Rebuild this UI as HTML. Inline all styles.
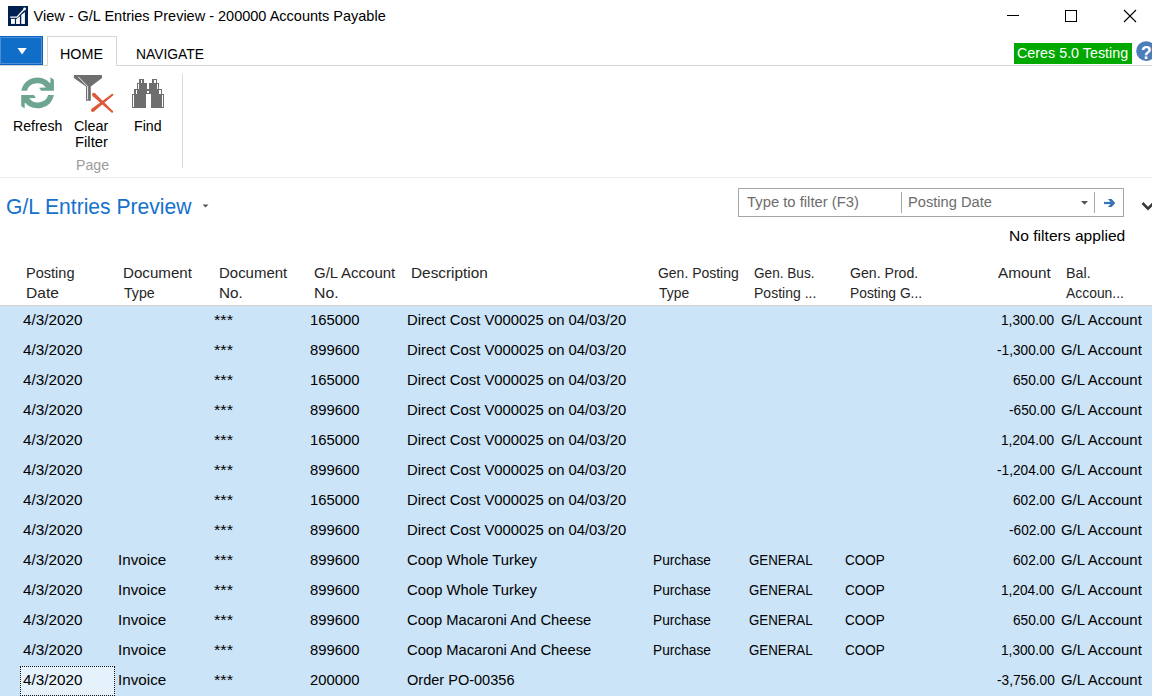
<!DOCTYPE html>
<html><head><meta charset="utf-8">
<style>
html,body{margin:0;padding:0;}
body{width:1152px;height:696px;overflow:hidden;position:relative;background:#fff;font-family:"Liberation Sans",sans-serif;color:#000;}
.a{position:absolute;}
.t{position:absolute;white-space:nowrap;line-height:1;transform-origin:0 0;}
.r{font-size:14.7px;color:#000;}
.h{font-size:14.6px;color:#262626;}
</style></head><body>
<!-- title bar -->
<svg class="a" style="left:8px;top:6px" width="20" height="20" viewBox="0 0 20 20">
  <rect x="0" y="0" width="20" height="20" fill="#002050"/>
  <g fill="#fff">
  <rect x="3" y="12.9" width="3.9" height="5"/>
  <path d="M8.1 13.3 L11.9 10.2 L11.9 17.9 L8.1 17.9 Z"/>
  <path d="M13.3 9.0 L16.9 5.9 L16.9 17.9 L13.3 17.9 Z"/>
  </g>
  <polyline points="2.2,11.1 8.9,11.1 16.5,3" fill="none" stroke="#fff" stroke-width="1.3"/>
  <circle cx="16.6" cy="3" r="1.4" fill="#fff"/>
</svg>
<!-- window controls -->
<div class="a" style="left:1007px;top:15px;width:12px;height:1px;background:#000"></div>
<div class="a" style="left:1065px;top:10px;width:10px;height:10px;border:1px solid #000"></div>
<svg class="a" style="left:1123px;top:9px" width="14" height="14" viewBox="0 0 14 14">
  <path d="M1 1 L13 13 M13 1 L1 13" stroke="#000" stroke-width="1.1" fill="none"/>
</svg>

<!-- ribbon tabs -->
<div class="a" style="left:-1px;top:36px;width:44px;height:29px;background:#106ec8;box-sizing:border-box;border:1px solid #0b62c0;box-shadow:inset 0 0 0 1px #4b8fd8"></div>
<svg class="a" style="left:17px;top:47px" width="10" height="8" viewBox="0 0 10 8"><path d="M0.5 1 L9.7 1 L5.1 7.4 Z" fill="#fff"/></svg>
<div class="a" style="left:0;top:65px;width:1152px;height:1px;background:#d6d6d6"></div>
<div class="a" style="left:47px;top:36px;width:70px;height:30px;box-sizing:border-box;border:1px solid #d6d6d6;border-bottom:none;background:#fff"></div>

<div class="a" style="left:1014px;top:43px;width:118px;height:21px;background:#00a800"></div>
<svg class="a" style="left:1134px;top:39px" width="20" height="24" viewBox="1134 39 20 24">
  <circle cx="1146.1" cy="51.05" r="9.9" fill="#4c7db9"/>
  <text x="1146.3" y="58.6" text-anchor="middle" font-family="Liberation Sans" font-weight="bold" font-size="17.5" fill="#fff">?</text>
</svg>

<!-- ribbon body -->
<svg class="a" style="left:16px;top:72px" width="44" height="42" viewBox="16 72 44 42">
  <g fill="#6ea591">
  <path d="M21.2 90.8 A16.4 15.4 0 0 1 50.3 83.4 L50.5 77.3 L53.9 79.8 L53.9 90.8 L41.2 90.8 L39.2 87.8 L46.0 87.6 A10.7 9.9 0 0 0 26.9 90.8 Z"/>
  <path d="M21.2 90.8 A16.4 15.4 0 0 1 50.3 83.4 L50.5 77.3 L53.9 79.8 L53.9 90.8 L41.2 90.8 L39.2 87.8 L46.0 87.6 A10.7 9.9 0 0 0 26.9 90.8 Z" transform="rotate(180 37.55 92.95)"/>
  </g>
</svg>
<svg class="a" style="left:70px;top:72px" width="48" height="42" viewBox="70 72 48 42">
  <path d="M73.9 75 L102 75 L102 78 L90.8 86.5 L90.8 100.7 L86 100.7 L86 86.5 L73.9 78 Z" fill="#6e6e6e"/>
  <path d="M78.2 76.8 L87.6 86.4 L87.6 99.6" fill="none" stroke="#fff" stroke-width="0.9"/>
  <g fill="#dc5a3a"><path d="M92.57 95.91 L111.52 112.53 L112.88 111.07 L95.03 93.29 Z"/><path d="M111.78 94.01 L91.69 108.78 L93.91 111.62 L113.02 95.59 Z"/><circle cx="93.8" cy="94.6" r="1.8"/><circle cx="92.8" cy="110.2" r="1.8"/><circle cx="112.2" cy="111.8" r="1"/><circle cx="112.4" cy="94.8" r="1"/></g>
</svg>
<svg class="a" style="left:126px;top:74px" width="44" height="38" viewBox="126 74 44 38" shape-rendering="crispEdges">
  <g fill="#6e6e6e"><rect x="139" y="79" width="5" height="4"/><rect x="137" y="83" width="10" height="6"/><rect x="134" y="89" width="13" height="5"/><rect x="132" y="94" width="14" height="14"/><rect x="147" y="89" width="3" height="5"/><rect x="152" y="79" width="5" height="4"/><rect x="149" y="83" width="10" height="6"/><rect x="150" y="89" width="12" height="5"/><rect x="151" y="94" width="13" height="14"/></g><g fill="#fff"><rect x="141" y="80" width="1" height="3"/><rect x="138" y="84" width="1" height="5"/><rect x="136" y="90" width="1" height="4"/><rect x="133" y="95" width="1" height="12"/><rect x="147" y="91" width="2" height="2"/><rect x="154" y="80" width="2" height="3"/><rect x="157" y="84" width="1" height="5"/><rect x="159" y="90" width="2" height="4"/><rect x="162" y="95" width="1" height="12"/></g>
</svg>
<div class="a" style="left:182px;top:74px;width:1px;height:94px;background:#dcdcdc"></div>
<div class="a" style="left:0;top:177px;width:1152px;height:1px;background:#ececec"></div>

<!-- page header -->
<svg class="a" style="left:202px;top:204px" width="7" height="4" viewBox="0 0 7 4"><path d="M0.5 0.5 L6.5 0.5 L3.5 3.5 Z" fill="#555"/></svg>

<div class="a" style="left:738px;top:188px;width:386px;height:29px;box-sizing:border-box;border:1px solid #a6a6a6"></div>
<div class="a" style="left:901px;top:192px;width:1px;height:21px;background:#a6a6a6"></div>
<svg class="a" style="left:1080px;top:200px" width="9" height="6" viewBox="0 0 9 6"><path d="M1 1 L8 1 L4.5 4.8 Z" fill="#555"/></svg>
<div class="a" style="left:1094px;top:192px;width:1px;height:21px;background:#a6a6a6"></div>
<svg class="a" style="left:1100px;top:195px" width="20" height="16" viewBox="1100 195 20 16">
  <g fill="#3b72b4"><path d="M1104 201.9 H1111.5 V204.1 H1104 Z"/><path d="M1108.0 199 L1111.6 199 L1115.3 203 L1111.6 207 L1108.0 207 L1111.4 203 Z"/></g>
</svg>
<svg class="a" style="left:1138px;top:196px" width="14" height="16" viewBox="1138 196 14 16">
  <path d="M1142.5 203 L1148 208.6 L1153.5 203" fill="none" stroke="#3a3a3a" stroke-width="2.6"/>
</svg>

<!-- grid header -->

<div class="a" style="left:0;top:305px;width:1152px;height:1px;background:#d2d2d2"></div>
<!-- rows -->
<div class="a" style="left:0;top:306px;width:1152px;height:390px;background:#cce4f7"></div>
<div class="a" style="left:20px;top:666px;width:95px;height:30px;box-sizing:border-box;background:#e5f1fb;border:1px dotted #111"></div>

<div class="t" style="left:33.50px;top:9.43px;font-size:14.5px;color:#000;transform:scaleX(1.0000)">View - G/L Entries Preview - 200000 Accounts Payable</div>
<div class="t" style="left:60.05px;top:46.20px;font-size:15px;color:#000;transform:scaleX(0.9545)">HOME</div>
<div class="t" style="left:136.28px;top:46.20px;font-size:15px;color:#000;transform:scaleX(0.9243)">NAVIGATE</div>
<div class="t" style="left:1017.41px;top:46.33px;font-size:14.5px;color:#fff;transform:scaleX(0.9874)">Ceres 5.0 Testing</div>
<div class="t" style="left:12.74px;top:118.75px;font-size:14px;color:#000;transform:scaleX(1.0053)">Refresh</div>
<div class="t" style="left:73.67px;top:118.75px;font-size:14px;color:#000;transform:scaleX(1.0250)">Clear</div>
<div class="t" style="left:74.94px;top:134.85px;font-size:14px;color:#000;transform:scaleX(1.0600)">Filter</div>
<div class="t" style="left:133.69px;top:118.75px;font-size:14px;color:#000;transform:scaleX(1.0115)">Find</div>
<div class="t" style="left:75.69px;top:158.35px;font-size:14px;color:#9c9c9c;transform:scaleX(1.0097)">Page</div>
<div class="t" style="left:5.94px;top:195.88px;font-size:22px;color:#1571cc;transform:scaleX(0.9575)">G/L Entries Preview</div>
<div class="t" style="left:746.80px;top:195.11px;font-size:14.75px;color:#6d6d6d;transform:scaleX(1.0045)">Type to filter (F3)</div>
<div class="t" style="left:907.81px;top:195.11px;font-size:14.75px;color:#6d6d6d;transform:scaleX(0.9928)">Posting Date</div>
<div class="t" style="left:1008.82px;top:229.23px;font-size:14.5px;color:#000;transform:scaleX(1.0764)">No filters applied</div>
<div class="t" style="left:26.40px;top:266.04px;font-size:14.6px;color:#262626;transform:scaleX(0.9957)">Posting</div>
<div class="t" style="left:26.33px;top:286.04px;font-size:14.6px;color:#262626;transform:scaleX(1.0655)">Date</div>
<div class="t" style="left:122.56px;top:266.04px;font-size:14.6px;color:#262626;transform:scaleX(1.0364)">Document</div>
<div class="t" style="left:123.60px;top:286.04px;font-size:14.6px;color:#262626;transform:scaleX(0.9710)">Type</div>
<div class="t" style="left:218.67px;top:266.04px;font-size:14.6px;color:#262626;transform:scaleX(1.0258)">Document</div>
<div class="t" style="left:218.65px;top:286.04px;font-size:14.6px;color:#262626;transform:scaleX(1.0476)">No.</div>
<div class="t" style="left:314.47px;top:266.04px;font-size:14.6px;color:#262626;transform:scaleX(1.0295)">G/L Account</div>
<div class="t" style="left:314.42px;top:286.04px;font-size:14.6px;color:#262626;transform:scaleX(1.0810)">No.</div>
<div class="t" style="left:410.85px;top:266.04px;font-size:14.6px;color:#262626;transform:scaleX(1.0521)">Description</div>
<div class="t" style="left:657.84px;top:266.04px;font-size:14.6px;color:#262626;transform:scaleX(0.9566)">Gen. Posting</div>
<div class="t" style="left:658.80px;top:286.04px;font-size:14.6px;color:#262626;transform:scaleX(0.9516)">Type</div>
<div class="t" style="left:753.57px;top:266.04px;font-size:14.6px;color:#262626;transform:scaleX(0.9317)">Gen. Bus.</div>
<div class="t" style="left:753.54px;top:286.04px;font-size:14.6px;color:#262626;transform:scaleX(0.9603)">Posting ...</div>
<div class="t" style="left:849.83px;top:266.04px;font-size:14.6px;color:#262626;transform:scaleX(0.9662)">Gen. Prod.</div>
<div class="t" style="left:849.85px;top:286.04px;font-size:14.6px;color:#262626;transform:scaleX(0.9459)">Posting G...</div>
<div class="t" style="left:998.10px;top:266.04px;font-size:14.6px;color:#262626;transform:scaleX(1.0500)">Amount</div>
<div class="t" style="left:1065.82px;top:266.04px;font-size:14.6px;color:#262626;transform:scaleX(0.9826)">Bal.</div>
<div class="t" style="left:1066.40px;top:286.04px;font-size:14.6px;color:#262626;transform:scaleX(0.9517)">Accoun...</div>
<div class="t" style="left:22.80px;top:312.66px;font-size:14.7px;color:#000;transform:scaleX(1.0421)">4/3/2020</div>
<div class="t" style="left:213.89px;top:312.66px;font-size:14.7px;color:#000;transform:scaleX(1.1125)">***</div>
<div class="t" style="left:310.29px;top:312.66px;font-size:14.7px;color:#000;transform:scaleX(1.0085)">165000</div>
<div class="t" style="left:406.59px;top:312.66px;font-size:14.7px;color:#000;transform:scaleX(1.0093)">Direct Cost V000025 on 04/03/20</div>
<div class="t" style="left:1061.38px;top:312.66px;font-size:14.7px;color:#000;transform:scaleX(1.0165)">G/L Account</div>
<div class="t" style="left:22.80px;top:342.66px;font-size:14.7px;color:#000;transform:scaleX(1.0421)">4/3/2020</div>
<div class="t" style="left:213.89px;top:342.66px;font-size:14.7px;color:#000;transform:scaleX(1.1125)">***</div>
<div class="t" style="left:310.29px;top:342.66px;font-size:14.7px;color:#000;transform:scaleX(1.0085)">899600</div>
<div class="t" style="left:406.59px;top:342.66px;font-size:14.7px;color:#000;transform:scaleX(1.0093)">Direct Cost V000025 on 04/03/20</div>
<div class="t" style="left:1061.38px;top:342.66px;font-size:14.7px;color:#000;transform:scaleX(1.0165)">G/L Account</div>
<div class="t" style="left:22.80px;top:372.66px;font-size:14.7px;color:#000;transform:scaleX(1.0421)">4/3/2020</div>
<div class="t" style="left:213.89px;top:372.66px;font-size:14.7px;color:#000;transform:scaleX(1.1125)">***</div>
<div class="t" style="left:310.29px;top:372.66px;font-size:14.7px;color:#000;transform:scaleX(1.0085)">165000</div>
<div class="t" style="left:406.59px;top:372.66px;font-size:14.7px;color:#000;transform:scaleX(1.0093)">Direct Cost V000025 on 04/03/20</div>
<div class="t" style="left:1061.38px;top:372.66px;font-size:14.7px;color:#000;transform:scaleX(1.0165)">G/L Account</div>
<div class="t" style="left:22.80px;top:402.66px;font-size:14.7px;color:#000;transform:scaleX(1.0421)">4/3/2020</div>
<div class="t" style="left:213.89px;top:402.66px;font-size:14.7px;color:#000;transform:scaleX(1.1125)">***</div>
<div class="t" style="left:310.29px;top:402.66px;font-size:14.7px;color:#000;transform:scaleX(1.0085)">899600</div>
<div class="t" style="left:406.59px;top:402.66px;font-size:14.7px;color:#000;transform:scaleX(1.0093)">Direct Cost V000025 on 04/03/20</div>
<div class="t" style="left:1061.38px;top:402.66px;font-size:14.7px;color:#000;transform:scaleX(1.0165)">G/L Account</div>
<div class="t" style="left:22.80px;top:432.66px;font-size:14.7px;color:#000;transform:scaleX(1.0421)">4/3/2020</div>
<div class="t" style="left:213.89px;top:432.66px;font-size:14.7px;color:#000;transform:scaleX(1.1125)">***</div>
<div class="t" style="left:310.29px;top:432.66px;font-size:14.7px;color:#000;transform:scaleX(1.0085)">165000</div>
<div class="t" style="left:406.59px;top:432.66px;font-size:14.7px;color:#000;transform:scaleX(1.0093)">Direct Cost V000025 on 04/03/20</div>
<div class="t" style="left:1061.38px;top:432.66px;font-size:14.7px;color:#000;transform:scaleX(1.0165)">G/L Account</div>
<div class="t" style="left:22.80px;top:462.66px;font-size:14.7px;color:#000;transform:scaleX(1.0421)">4/3/2020</div>
<div class="t" style="left:213.89px;top:462.66px;font-size:14.7px;color:#000;transform:scaleX(1.1125)">***</div>
<div class="t" style="left:310.29px;top:462.66px;font-size:14.7px;color:#000;transform:scaleX(1.0085)">899600</div>
<div class="t" style="left:406.59px;top:462.66px;font-size:14.7px;color:#000;transform:scaleX(1.0093)">Direct Cost V000025 on 04/03/20</div>
<div class="t" style="left:1061.38px;top:462.66px;font-size:14.7px;color:#000;transform:scaleX(1.0165)">G/L Account</div>
<div class="t" style="left:22.80px;top:492.66px;font-size:14.7px;color:#000;transform:scaleX(1.0421)">4/3/2020</div>
<div class="t" style="left:213.89px;top:492.66px;font-size:14.7px;color:#000;transform:scaleX(1.1125)">***</div>
<div class="t" style="left:310.29px;top:492.66px;font-size:14.7px;color:#000;transform:scaleX(1.0085)">165000</div>
<div class="t" style="left:406.59px;top:492.66px;font-size:14.7px;color:#000;transform:scaleX(1.0093)">Direct Cost V000025 on 04/03/20</div>
<div class="t" style="left:1061.38px;top:492.66px;font-size:14.7px;color:#000;transform:scaleX(1.0165)">G/L Account</div>
<div class="t" style="left:22.80px;top:522.66px;font-size:14.7px;color:#000;transform:scaleX(1.0421)">4/3/2020</div>
<div class="t" style="left:213.89px;top:522.66px;font-size:14.7px;color:#000;transform:scaleX(1.1125)">***</div>
<div class="t" style="left:310.29px;top:522.66px;font-size:14.7px;color:#000;transform:scaleX(1.0085)">899600</div>
<div class="t" style="left:406.59px;top:522.66px;font-size:14.7px;color:#000;transform:scaleX(1.0093)">Direct Cost V000025 on 04/03/20</div>
<div class="t" style="left:1061.38px;top:522.66px;font-size:14.7px;color:#000;transform:scaleX(1.0165)">G/L Account</div>
<div class="t" style="left:22.80px;top:552.66px;font-size:14.7px;color:#000;transform:scaleX(1.0421)">4/3/2020</div>
<div class="t" style="left:117.96px;top:552.66px;font-size:14.7px;color:#000;transform:scaleX(1.0356)">Invoice</div>
<div class="t" style="left:213.89px;top:552.66px;font-size:14.7px;color:#000;transform:scaleX(1.1125)">***</div>
<div class="t" style="left:310.29px;top:552.66px;font-size:14.7px;color:#000;transform:scaleX(1.0085)">899600</div>
<div class="t" style="left:406.59px;top:552.66px;font-size:14.7px;color:#000;transform:scaleX(1.0078)">Coop Whole Turkey</div>
<div class="t" style="left:653.37px;top:552.66px;font-size:14.7px;color:#000;transform:scaleX(0.9328)">Purchase</div>
<div class="t" style="left:748.89px;top:552.66px;font-size:14.7px;color:#000;transform:scaleX(0.9058)">GENERAL</div>
<div class="t" style="left:845.28px;top:552.66px;font-size:14.7px;color:#000;transform:scaleX(0.9190)">COOP</div>
<div class="t" style="left:1061.38px;top:552.66px;font-size:14.7px;color:#000;transform:scaleX(1.0165)">G/L Account</div>
<div class="t" style="left:22.80px;top:582.66px;font-size:14.7px;color:#000;transform:scaleX(1.0421)">4/3/2020</div>
<div class="t" style="left:117.96px;top:582.66px;font-size:14.7px;color:#000;transform:scaleX(1.0356)">Invoice</div>
<div class="t" style="left:213.89px;top:582.66px;font-size:14.7px;color:#000;transform:scaleX(1.1125)">***</div>
<div class="t" style="left:310.29px;top:582.66px;font-size:14.7px;color:#000;transform:scaleX(1.0085)">899600</div>
<div class="t" style="left:406.59px;top:582.66px;font-size:14.7px;color:#000;transform:scaleX(1.0078)">Coop Whole Turkey</div>
<div class="t" style="left:653.37px;top:582.66px;font-size:14.7px;color:#000;transform:scaleX(0.9328)">Purchase</div>
<div class="t" style="left:748.89px;top:582.66px;font-size:14.7px;color:#000;transform:scaleX(0.9058)">GENERAL</div>
<div class="t" style="left:845.28px;top:582.66px;font-size:14.7px;color:#000;transform:scaleX(0.9190)">COOP</div>
<div class="t" style="left:1061.38px;top:582.66px;font-size:14.7px;color:#000;transform:scaleX(1.0165)">G/L Account</div>
<div class="t" style="left:22.80px;top:612.66px;font-size:14.7px;color:#000;transform:scaleX(1.0421)">4/3/2020</div>
<div class="t" style="left:117.96px;top:612.66px;font-size:14.7px;color:#000;transform:scaleX(1.0356)">Invoice</div>
<div class="t" style="left:213.89px;top:612.66px;font-size:14.7px;color:#000;transform:scaleX(1.1125)">***</div>
<div class="t" style="left:310.29px;top:612.66px;font-size:14.7px;color:#000;transform:scaleX(1.0085)">899600</div>
<div class="t" style="left:406.60px;top:612.66px;font-size:14.7px;color:#000;transform:scaleX(1.0027)">Coop Macaroni And Cheese</div>
<div class="t" style="left:653.37px;top:612.66px;font-size:14.7px;color:#000;transform:scaleX(0.9328)">Purchase</div>
<div class="t" style="left:748.89px;top:612.66px;font-size:14.7px;color:#000;transform:scaleX(0.9058)">GENERAL</div>
<div class="t" style="left:845.28px;top:612.66px;font-size:14.7px;color:#000;transform:scaleX(0.9190)">COOP</div>
<div class="t" style="left:1061.38px;top:612.66px;font-size:14.7px;color:#000;transform:scaleX(1.0165)">G/L Account</div>
<div class="t" style="left:22.80px;top:642.66px;font-size:14.7px;color:#000;transform:scaleX(1.0421)">4/3/2020</div>
<div class="t" style="left:117.96px;top:642.66px;font-size:14.7px;color:#000;transform:scaleX(1.0356)">Invoice</div>
<div class="t" style="left:213.89px;top:642.66px;font-size:14.7px;color:#000;transform:scaleX(1.1125)">***</div>
<div class="t" style="left:310.29px;top:642.66px;font-size:14.7px;color:#000;transform:scaleX(1.0085)">899600</div>
<div class="t" style="left:406.60px;top:642.66px;font-size:14.7px;color:#000;transform:scaleX(1.0027)">Coop Macaroni And Cheese</div>
<div class="t" style="left:653.37px;top:642.66px;font-size:14.7px;color:#000;transform:scaleX(0.9328)">Purchase</div>
<div class="t" style="left:748.89px;top:642.66px;font-size:14.7px;color:#000;transform:scaleX(0.9058)">GENERAL</div>
<div class="t" style="left:845.28px;top:642.66px;font-size:14.7px;color:#000;transform:scaleX(0.9190)">COOP</div>
<div class="t" style="left:1061.38px;top:642.66px;font-size:14.7px;color:#000;transform:scaleX(1.0165)">G/L Account</div>
<div class="t" style="left:22.80px;top:672.66px;font-size:14.7px;color:#000;transform:scaleX(1.0421)">4/3/2020</div>
<div class="t" style="left:117.96px;top:672.66px;font-size:14.7px;color:#000;transform:scaleX(1.0356)">Invoice</div>
<div class="t" style="left:213.89px;top:672.66px;font-size:14.7px;color:#000;transform:scaleX(1.1125)">***</div>
<div class="t" style="left:310.29px;top:672.66px;font-size:14.7px;color:#000;transform:scaleX(1.0085)">200000</div>
<div class="t" style="left:406.61px;top:672.66px;font-size:14.7px;color:#000;transform:scaleX(0.9897)">Order PO-00356</div>
<div class="t" style="left:1061.38px;top:672.66px;font-size:14.7px;color:#000;transform:scaleX(1.0165)">G/L Account</div>
<div class="t" style="left:1001.17px;top:312.66px;font-size:14.7px;color:#000;transform:scaleX(0.9304)">1,300.00</div>
<div class="t" style="left:996.52px;top:342.66px;font-size:14.7px;color:#000;transform:scaleX(0.9304)">-1,300.00</div>
<div class="t" style="left:1013.26px;top:372.66px;font-size:14.7px;color:#000;transform:scaleX(0.9304)">650.00</div>
<div class="t" style="left:1008.61px;top:402.66px;font-size:14.7px;color:#000;transform:scaleX(0.9304)">-650.00</div>
<div class="t" style="left:1001.17px;top:432.66px;font-size:14.7px;color:#000;transform:scaleX(0.9304)">1,204.00</div>
<div class="t" style="left:996.52px;top:462.66px;font-size:14.7px;color:#000;transform:scaleX(0.9304)">-1,204.00</div>
<div class="t" style="left:1013.26px;top:492.66px;font-size:14.7px;color:#000;transform:scaleX(0.9304)">602.00</div>
<div class="t" style="left:1008.61px;top:522.66px;font-size:14.7px;color:#000;transform:scaleX(0.9304)">-602.00</div>
<div class="t" style="left:1013.26px;top:552.66px;font-size:14.7px;color:#000;transform:scaleX(0.9304)">602.00</div>
<div class="t" style="left:1001.17px;top:582.66px;font-size:14.7px;color:#000;transform:scaleX(0.9304)">1,204.00</div>
<div class="t" style="left:1013.26px;top:612.66px;font-size:14.7px;color:#000;transform:scaleX(0.9304)">650.00</div>
<div class="t" style="left:1001.17px;top:642.66px;font-size:14.7px;color:#000;transform:scaleX(0.9304)">1,300.00</div>
<div class="t" style="left:996.52px;top:672.66px;font-size:14.7px;color:#000;transform:scaleX(0.9304)">-3,756.00</div>
</body></html>
